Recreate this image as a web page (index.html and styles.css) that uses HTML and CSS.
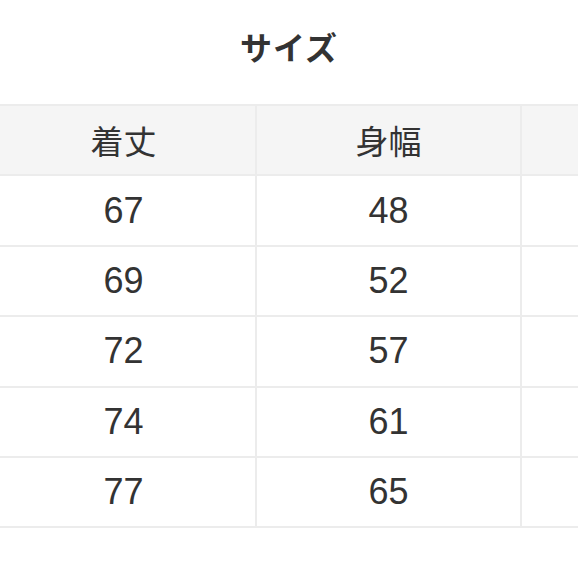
FILE: index.html
```html
<!DOCTYPE html>
<html lang="ja">
<head>
<meta charset="utf-8">
<link rel="stylesheet" href="styles.css">
</head>
<body>
<div class="page">
  <h2 class="title">サイズ</h2>
  <table class="size-table">
    <thead>
      <tr><th>着丈</th><th>身幅</th><th>袖丈</th></tr>
    </thead>
    <tbody>
      <tr><td>67</td><td>48</td><td>19</td></tr>
      <tr><td>69</td><td>52</td><td>20</td></tr>
      <tr><td>72</td><td>57</td><td>21</td></tr>
      <tr><td>74</td><td>61</td><td>22</td></tr>
      <tr><td>77</td><td>65</td><td>23</td></tr>
    </tbody>
  </table>
</div>
</body>
</html>
```
FILE: styles.css
```css
html, body {
  margin: 0;
  padding: 0;
  background: #ffffff;
}
.page {
  width: 578px;
  height: 578px;
  overflow: hidden;
  font-family: "Liberation Sans", "Noto Sans CJK JP", sans-serif;
  color: #333333;
}
.title {
  margin: 0;
  height: 104px;
  display: flex;
  align-items: center;
  justify-content: center;
  padding-bottom: 12px;
  box-sizing: border-box;
  font-family: "Noto Sans CJK JP", sans-serif;
  font-size: 32px;
  font-weight: 700;
  color: #333333;
  letter-spacing: 1px;
}
.size-table {
  margin-left: -10px;
  border-collapse: collapse;
  table-layout: fixed;
  width: 797px;
}
.size-table th,
.size-table td {
  width: 263px;
  height: 68.4px;
  padding: 0;
  border: 2px solid #ececec;
  text-align: center;
  vertical-align: middle;
  font-weight: 400;
  font-size: 36px;
  color: #333333;
}
.size-table th {
  background: #f5f5f5;
  font-family: "Noto Sans CJK JP", sans-serif;
  font-size: 33px;
}
.size-table td {
  background: #ffffff;
}
```
